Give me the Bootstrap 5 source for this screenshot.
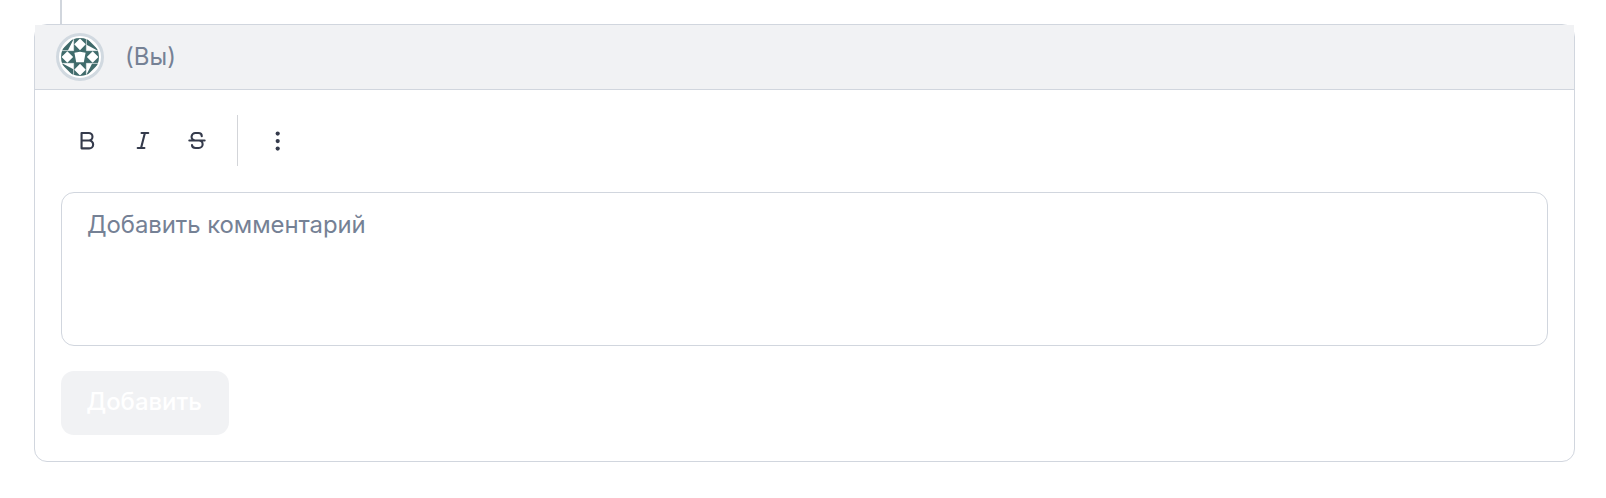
<!DOCTYPE html>
<html lang="ru">
<head>
<meta charset="utf-8">
<meta name="viewport" content="width=device-width, initial-scale=1">
<title>Комментарий</title>
<link href="https://cdn.jsdelivr.net/npm/bootstrap@5.3.0/dist/css/bootstrap.min.css" rel="stylesheet">
<style>
body{font-family:Inter,"Noto Sans",sans-serif;font-size:24px;line-height:36px;color:#343a4b;background:#fff}
.thread{padding:0 31px 0 34px}
.thread-line{width:2px;height:24px;margin-left:26px;background:#d1d6dd}
.comment-card{height:438px;border:1px solid #d1d6de;border-radius:13px}
.comment-head{height:65px;padding:0 21px;gap:21px;background:#f1f2f4;border-bottom:1px solid #d1d6de;color:#758195}
.avatar{width:48px;height:48px;padding:2px;border:3px solid #d1d9e0;border-radius:50%;background:#fff}
.avatar svg{display:block;border-radius:50%}
.comment-content{padding:25px 26px 0}
.tool{width:54px;height:51px;padding:0 1px 0 0;border:0;border-radius:8px;color:#343a4b}
.tool-slant{padding:0}
.tool-divider{width:1px;height:51px;margin:0 13px 0 14px;background:#d3d5d9}
.editor.form-control{height:154px;margin-top:26px;padding:14px 25px;border:1px solid #d1d6de;border-radius:13px;resize:none;font-size:23.9px;line-height:36px;letter-spacing:-.05px}
.editor::placeholder{color:#758195;opacity:1}
.btn.submit{width:168px;height:64px;margin-top:25px;padding:0 2px 2px 0;border:0;border-radius:13px;background:#f1f2f4;color:#fff;font-size:23.9px;font-weight:500;opacity:1}
</style>
</head>
<body>
<main class="thread">
  <div class="thread-line"></div>
  <section class="comment-card">
    <header class="comment-head d-flex align-items-center">
      <div class="avatar flex-shrink-0">
        <svg width="38" height="38" viewBox="0 0 36 36">
          <path fill="#406b6b" d="M12 0h12v12h12v12H24v12H12V24H0V12h12z"/>
          <path fill="#fff" d="M18 .5L23.500 6 18 11.500 12.500 6zM30 12.500L35.500 18 30 23.500 24.500 18zM18 24.500L23.500 30 18 35.500 12.500 30zM6 12.500L11.500 18 6 23.500.5 18zM12.700 14L18 13l5.300 1-1.700 9h-7.200z"/>
          <path id="leaf" fill="#406b6b" d="M29.500 24.200H36L24.200 36v-1.500z"/>
          <use href="#leaf" transform="rotate(90 18 18)"/>
          <use href="#leaf" transform="rotate(180 18 18)"/>
          <use href="#leaf" transform="rotate(270 18 18)"/>
          <path stroke="#fff" stroke-width=".4" d="M12 0v12H0M24 0v12h12M0 24h12v12M36 24H24v12" fill="none"/>
        </svg>
      </div>
      <span>(Вы)</span>
    </header>
    <div class="comment-content">
      <div class="d-flex align-items-center" role="toolbar">
        <button class="btn tool d-flex align-items-center justify-content-center" aria-label="Bold"><svg width="23" height="23" viewBox="0 0 24 24" fill="none" stroke="currentColor" stroke-width="2.200" stroke-linejoin="round"><path d="M5.800 4.200h7.500a3.900 3.900 0 0 1 0 7.800H5.800zM5.800 12h8a4.100 4.100 0 0 1 0 8.200h-8z"/></svg></button>
        <button class="btn tool tool-slant d-flex align-items-center justify-content-center" aria-label="Italic"><svg width="23" height="23" viewBox="0 0 24 24" fill="none" stroke="currentColor" stroke-width="2.200" stroke-linecap="round"><path d="M11 4.200h7M7 19.800h7M14.500 4.200l-4 15.600"/></svg></button>
        <button class="btn tool tool-slant d-flex align-items-center justify-content-center" aria-label="Strikethrough"><svg width="23" height="23" viewBox="0 0 24 24" fill="none" stroke="currentColor" stroke-width="2.200" stroke-linecap="round"><path d="M4.500 12h16M17.500 7.500c0-2-1.500-3.300-3.500-3.300h-3A3.800 3.800 0 0 0 10.500 12h4a3.900 3.900 0 0 1 0 7.800H11c-2.200 0-3.700-1.300-3.700-3"/></svg></button>
        <div class="tool-divider"></div>
        <button class="btn tool tool-slant d-flex align-items-center justify-content-center" aria-label="More"><svg width="24" height="24" fill="currentColor"><circle cx="11.700" cy="4.600" r="2.100"/><circle cx="11.700" cy="12.100" r="2.100"/><circle cx="11.700" cy="19.600" r="2.100"/></svg></button>
      </div>
      <textarea class="form-control editor d-block" placeholder="Добавить комментарий"></textarea>
      <button class="btn submit" disabled>Добавить</button>
    </div>
  </section>
</main>
<script src="https://cdn.jsdelivr.net/npm/bootstrap@5.3.0/dist/js/bootstrap.bundle.min.js"></script>
</body>
</html>
